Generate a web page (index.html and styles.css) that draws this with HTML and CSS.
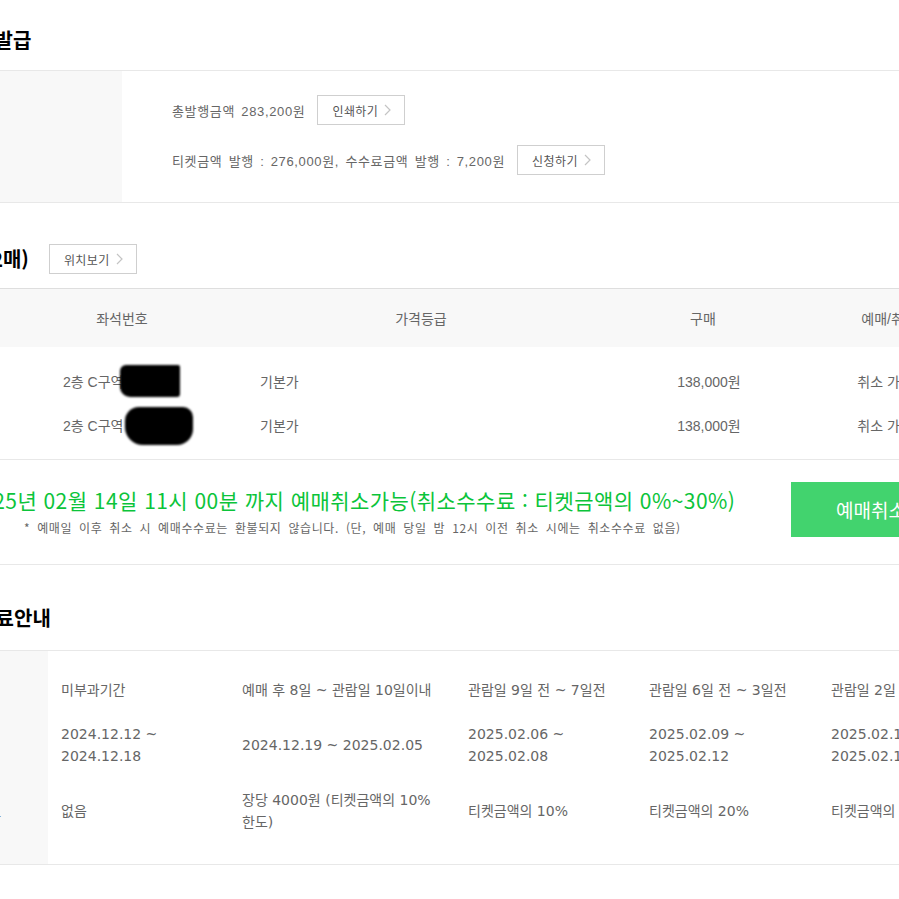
FILE: index.html
```html
<!DOCTYPE html>
<html lang="ko">
<head>
<meta charset="utf-8">
<title>예매 상세</title>
<link rel="stylesheet" href="styles.css">
</head>
<body>
<div class="page">

  <section class="sec">
    <div class="head head-first">
      <h2 class="title t-receipt">현금영수증 발급</h2>
    </div>
    <div class="info">
      <div class="info-label"></div>
      <div class="info-body">
        <div class="info-line">
          <span>총발행금액 283,200원</span>
          <a class="btn">인쇄하기<svg class="chev" width="7" height="12" viewBox="0 0 7 12"><polyline points="1,1 6,6 1,11" fill="none" stroke="#c4c4c4" stroke-width="1.2"/></svg></a>
        </div>
        <div class="info-line">
          <span>티켓금액 발행 : 276,000원, 수수료금액 발행 : 7,200원</span>
          <a class="btn">신청하기<svg class="chev" width="7" height="12" viewBox="0 0 7 12"><polyline points="1,1 6,6 1,11" fill="none" stroke="#c4c4c4" stroke-width="1.2"/></svg></a>
        </div>
      </div>
    </div>
  </section>

  <section class="sec">
    <div class="head">
      <div class="head-row">
        <h2 class="title t-seat">좌석정보(2매)</h2>
        <a class="btn">위치보기<svg class="chev" width="7" height="12" viewBox="0 0 7 12"><polyline points="1,1 6,6 1,11" fill="none" stroke="#c4c4c4" stroke-width="1.2"/></svg></a>
      </div>
    </div>
    <div class="seat-table">
      <div class="seat-row seat-headrow">
        <div class="c-no">예매번호</div>
        <div class="c-seat">좌석번호</div>
        <div class="c-grade">가격등급</div>
        <div class="c-buy">구매</div>
        <div class="c-state">예매/취소</div>
        <div></div>
      </div>
      <div class="seat-body">
        <div class="seat-row">
          <div class="c-no"></div>
          <div class="c-seat">2층 C구역<span class="mask mask-a"></span></div>
          <div class="c-grade">기본가</div>
          <div class="c-buy">138,000원</div>
          <div class="c-state">취소 가능</div>
          <div></div>
        </div>
        <div class="seat-row">
          <div class="c-no"></div>
          <div class="c-seat">2층 C구역<span class="mask mask-b"></span></div>
          <div class="c-grade">기본가</div>
          <div class="c-buy">138,000원</div>
          <div class="c-state">취소 가능</div>
          <div></div>
        </div>
      </div>
    </div>
  </section>

  <section class="cancel">
    <div class="cancel-text">
      <p class="cancel-main">2025년 02월 14일 11시 00분 까지 예매취소가능(취소수수료 : 티켓금액의 0%~30%)</p>
      <p class="cancel-note">* 예매일 이후 취소 시 예매수수료는 환불되지 않습니다. (단, 예매 당일 밤 12시 이전 취소 시에는 취소수수료 없음)</p>
    </div>
    <a class="btn-cancel">예매취소</a>
  </section>

  <section class="sec">
    <div class="head">
      <h2 class="title t-fee">취소수수료안내</h2>
    </div>
    <div class="fee">
      <div class="fee-side">
        <div class="fee-label">구분</div>
        <div class="fee-label">기간</div>
        <div class="fee-label">취소수수료</div>
      </div>
      <div class="fee-main">
        <div class="fee-cell">미부과기간</div>
        <div class="fee-cell">예매 후 8일 ~ 관람일 10일이내</div>
        <div class="fee-cell">관람일 9일 전 ~ 7일전</div>
        <div class="fee-cell">관람일 6일 전 ~ 3일전</div>
        <div class="fee-cell">관람일 2일 전 ~ 1일전</div>

        <div class="fee-cell">2024.12.12 ~<br>2024.12.18</div>
        <div class="fee-cell">2024.12.19 ~ 2025.02.05</div>
        <div class="fee-cell">2025.02.06 ~<br>2025.02.08</div>
        <div class="fee-cell">2025.02.09 ~<br>2025.02.12</div>
        <div class="fee-cell">2025.02.13 ~<br>2025.02.14</div>

        <div class="fee-cell">없음</div>
        <div class="fee-cell">장당 4000원 (티켓금액의 10%<br>한도)</div>
        <div class="fee-cell">티켓금액의 10%</div>
        <div class="fee-cell">티켓금액의 20%</div>
        <div class="fee-cell">티켓금액의 30%</div>
      </div>
    </div>
  </section>

</div>
</body>
</html>
```

FILE: styles.css
```css
* {
  box-sizing: border-box;
  margin: 0;
  padding: 0;
}

html,
body {
  overflow: hidden;
  background: #fff;
}

body {
  margin: 0;
  font-family: "Liberation Sans", "Noto Sans CJK KR", sans-serif;
  color: #666;
}

.page {
  width: 1200px;
  margin-left: -110px;
}

/* section headings */
.head {
  height: 85px;
  padding-top: 41px;
}

.head-first {
  height: 70px;
  padding-top: 28px;
}

.head-row {
  display: flex;
  align-items: center;
  gap: 20px;
}

.title {
  font-family: "Noto Sans CJK KR", sans-serif;
  font-size: 20px;
  line-height: 24px;
  font-weight: 700;
  color: #000;
  white-space: nowrap;
}

.t-receipt { margin-left: 7px; }
.t-seat { margin-left: 20px; }
.t-fee { margin-left: 32px; }

/* buttons */
.btn {
  display: inline-flex;
  align-items: center;
  gap: 6px;
  height: 30px;
  padding: 0 13px 0 14px;
  border: 1px solid #cfcfcf;
  background: #fff;
  font-family: "Noto Sans CJK KR", sans-serif;
  font-size: 12px;
  letter-spacing: 0.4px;
  color: #555;
  white-space: nowrap;
}

.chev {
  display: block;
  flex: none;
}

/* receipt info */
.info {
  display: flex;
  border-top: 1px solid #e8e8e8;
  border-bottom: 1px solid #e8e8e8;
}

.info-label {
  flex: none;
  width: 232px;
  background: #f8f8f8;
}

.info-body {
  display: flex;
  flex-direction: column;
  gap: 20px;
  padding: 24px 0 27px 50px;
}

.info-line {
  display: flex;
  align-items: center;
  gap: 12px;
  height: 30px;
  font-size: 13px;
  letter-spacing: 0.65px;
  word-spacing: 2px;
  color: #666;
  white-space: nowrap;
}

/* seat table */
.seat-table {
  border-top: 1px solid #dedede;
  border-bottom: 1px solid #e8e8e8;
}

.seat-row {
  display: grid;
  grid-template-columns: 110px 244px 354px 210px 170px 1fr;
  align-items: center;
  height: 44px;
  font-size: 14px;
  color: #666;
  white-space: nowrap;
}

.seat-headrow {
  height: 58px;
  background: #f8f8f8;
  text-align: center;
}

.seat-headrow .c-state {
  padding-right: 8px;
}

.seat-body {
  padding: 12px 0;
}

.seat-body .c-seat {
  padding-left: 63px;
  display: flex;
  align-items: center;
}

.seat-body .c-grade {
  padding-left: 16px;
}

.seat-body .c-buy,
.seat-body .c-state {
  text-align: center;
}

.seat-body .c-buy {
  padding-left: 12px;
}

.seat-body .c-state {
  padding-right: 16px;
}

.mask {
  display: inline-block;
  background: #000;
  filter: blur(1.2px);
}

.mask-a {
  width: 60px;
  height: 32px;
  margin-left: -3px;
  border-radius: 6px 2px 3px 10px;
}

.mask-b {
  width: 68px;
  height: 38px;
  margin-left: 2px;
  margin-top: 2px;
  border-radius: 14px 10px 16px 18px;
}

/* cancel area */
.cancel {
  display: flex;
  align-items: flex-start;
  padding: 22px 0 27px 79px;
  border-bottom: 1px solid #e8e8e8;
}

.cancel-text {
  flex: none;
  width: 822px;
  padding-top: 4px;
}

.cancel-main {
  font-family: "Noto Sans CJK KR", sans-serif;
  font-size: 21px;
  line-height: 28px;
  letter-spacing: 0.45px;
  color: #0bc43a;
  white-space: nowrap;
}

.cancel-note {
  margin: 5px 0 0 55px;
  font-family: "Noto Sans CJK KR", sans-serif;
  font-size: 12px;
  line-height: 18px;
  letter-spacing: 0.6px;
  word-spacing: 3px;
  color: #666;
  white-space: nowrap;
}

.btn-cancel {
  flex: none;
  display: flex;
  align-items: center;
  justify-content: center;
  width: 160px;
  height: 55px;
  background: #42d36e;
  color: #fff;
  font-family: "Noto Sans CJK KR", sans-serif;
  font-size: 19px;
}

/* fee table */
.fee {
  display: flex;
  border-top: 1px solid #e8e8e8;
  border-bottom: 1px solid #e8e8e8;
}

.fee-side {
  flex: none;
  width: 158px;
  display: grid;
  grid-template-rows: 44px 66px 66px;
  padding: 17px 0 20px;
  background: #f8f8f8;
}

.fee-label {
  display: flex;
  align-items: center;
  justify-content: center;
  font-family: "Noto Sans CJK KR", sans-serif;
  font-size: 14px;
  color: #666;
}

.fee-main {
  flex: none;
  display: grid;
  grid-template-columns: 181px 226px 181px 182px 181px;
  grid-template-rows: 44px 66px 66px;
  align-items: center;
  padding: 17px 0 20px;
}

.fee-cell {
  padding-left: 13px;
  font-family: "DejaVu Sans", "Noto Sans CJK KR", sans-serif;
  font-size: 14px;
  line-height: 22px;
  color: #666;
  white-space: nowrap;
}
```
